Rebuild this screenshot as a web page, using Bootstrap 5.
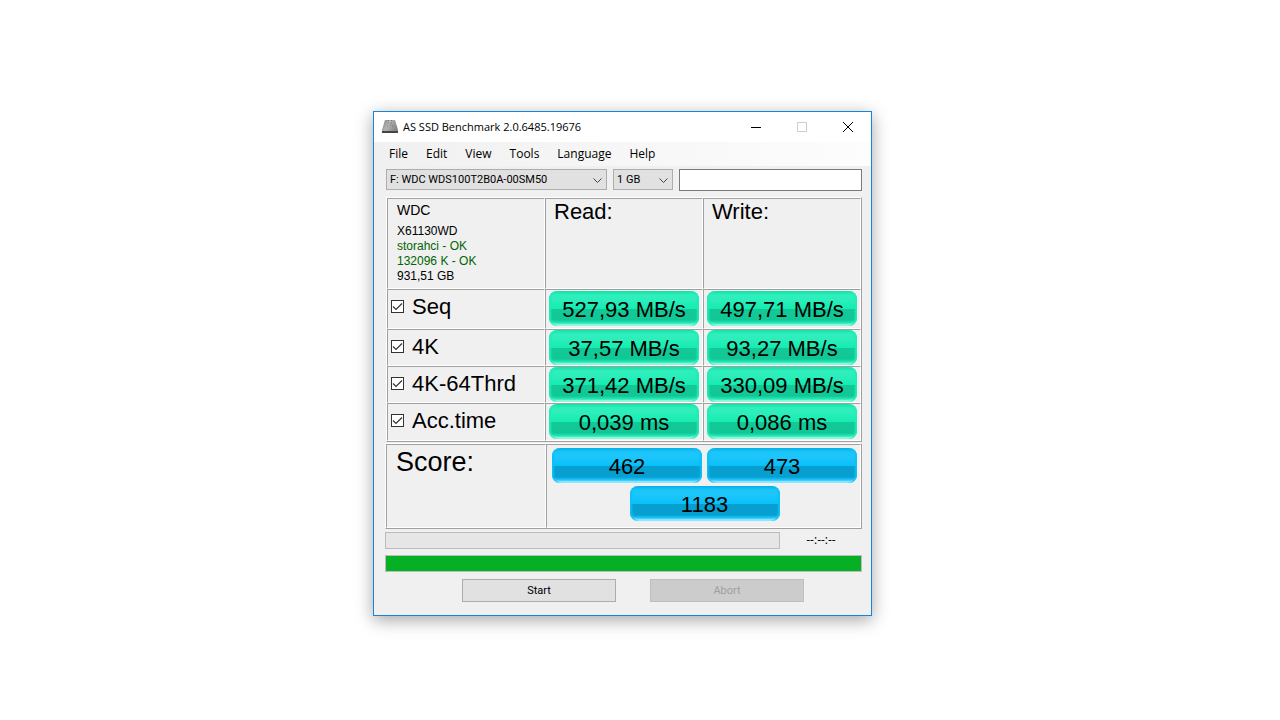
<!DOCTYPE html>
<html lang="en">
<head>
<meta charset="utf-8">
<meta name="viewport" content="width=device-width, initial-scale=1">
<title>AS SSD Benchmark</title>
<link rel="stylesheet" href="https://cdn.jsdelivr.net/npm/bootstrap@5.3.0/dist/css/bootstrap.min.css">
<style>
  body { background: #fff; color: #000; }
  .desktop { padding: 7px 35px 0 0; }
  .app-window {
    max-width: 499px; background: #f0f0f0; border: 1px solid #1883d7;
    box-shadow: 0 4px 16px rgba(0,0,0,.36);
    font: 12px/16px "Open Sans", "Noto Sans", sans-serif;
  }
  .title-bar { height: 30px; background: #fff; padding-left: 8px; }
  .title-bar h1 { font-size: 11px; line-height: 16px; font-weight: 400; padding-left: 5px; }
  .win-btn { width: 46px; height: 30px; padding: 0; border: 0; background: none; display: grid; place-items: center; }
  .menu-bar { height: 24px; padding-left: 15px; background: linear-gradient(90deg, #f0f0f0, #fdfdfd); gap: 18px; }
  .menu-bar a { color: #000; text-decoration: none; }
  .client { padding: 3px 9px 13px 11px; }
  .tool-row { gap: 6px; padding-left: 1px; margin-bottom: 6px; }
  .combo {
    appearance: none; height: 21px; padding: 0 20px 0 3px; border: 1px solid #adadad; border-radius: 0; color: #000;
    background: #e1e1e1 url("data:image/svg+xml,%3Csvg xmlns='http://www.w3.org/2000/svg' width='9' height='6'%3E%3Cpath d='M.5 .5l4 4 4-4' fill='none' stroke='%23444'/%3E%3C/svg%3E") no-repeat right 4px top 8px;
    font: 11px/16px Roboto, sans-serif;
  }
  .combo-size { width: 60px; }
  .name-box { width: 183px; height: 22px; border: 1px solid #7a7a7a; background: #fff; }
  .results, .score-panel { font-family: "Liberation Sans", Arial, sans-serif; font-size: 22px; line-height: 26px; }
  .panel { border: 1px solid; border-color: #fff #a0a0a0 #a0a0a0 #fff; }
  .results-panel { margin-left: 1px; }
  .results { table-layout: fixed; border-collapse: separate; border-spacing: 0; }
  .inset { border: 1px solid !important; border-color: #a0a0a0 #fff #fff #a0a0a0 !important; }
  .results th { font-weight: 400; }
  .results thead th { height: 91px; padding: 0 8px; vertical-align: top; }
  .results thead .drive { padding: 4px 9px 0; font-size: 12px; line-height: 15px; }
  .drive-name { font-size: 14px; line-height: 15px; margin-bottom: 6px; }
  .ok { color: #006400; }
  .results tbody th, .results tbody td { height: 37px; padding: 0 3px; vertical-align: top; }
  .results tbody tr:first-child > * { height: 40px; }
  .results tbody tr:first-child > td { padding-top: 1px; }
  .results tbody tr:last-child > * { height: 38px; }
  .results tbody label { height: 33px; gap: 8px; }
  .tick {
    appearance: none; width: 13px; height: 13px; margin: 0; border: 1px solid #333; background: #fff;
  }
  .tick:checked { background: #fff url("data:image/svg+xml,%3Csvg xmlns='http://www.w3.org/2000/svg' width='11' height='11'%3E%3Cpath d='M1 5.500l3 3 6-6' fill='none' stroke='%23333' stroke-width='1.200'/%3E%3C/svg%3E") center no-repeat; }
  .gauge {
    height: 35px; border-radius: 8px; padding-top: 6px; text-align: center; white-space: nowrap;
    background: linear-gradient(#14e0a6 0, #30efbd 4px, #2ceebb 9px, #14ecb0 18px, #13c997 18px, #12c796 29px, #20ecb8 32px, #a8f7e2 35px);
    box-shadow: inset 3px 0 2px -1px #1cefb6, inset -3px 0 2px -1px #1cefb6, inset 0 -3px 1px -1px rgba(170,250,226,.6);
  }
  .gauge-blue {
    width: 150px;
    background: linear-gradient(#05aee4 0, #1cc6fb 4px, #1cc6fb 9px, #08c0f8 18px, #069fcf 18px, #069fcf 29px, #20c8ff 32px, #a8eaff 35px);
    box-shadow: inset 3px 0 2px -1px #0cc0f8, inset -3px 0 2px -1px #0cc0f8, inset 0 -3px 1px -1px rgba(170,236,255,.6);
  }
  .score-panel { margin-top: 1px; min-height: 86px; }
  .score-title { width: 160px; padding: 1px 9px; font-size: 27px; line-height: 32px; font-weight: 400; }
  .score-values { padding: 3px 3px 6px 5px; gap: 3px; }
  .meter { height: 17px; border: 1px solid #bcbcbc; border-radius: 0; background: #e6e6e6; }
  .meter .progress-bar { background: #06b025; }
  .status-row { margin: 3px 0 6px; }
  .clock { width: 82px; font-size: 12px; }
  .actions { gap: 34px; margin-top: 7px; padding-left: 19px; }
  .act {
    width: 154px; height: 23px; padding: 0; border: 1px solid #adadad; background: #e1e1e1; color: #000;
    font: 11px/16px Roboto, sans-serif;
  }
  .act:disabled { background: #ccc; border-color: #bfbfbf; color: #a0a0a0; }
</style>
</head>
<body>
<div class="desktop min-vh-100 d-flex align-items-center justify-content-center">
  <main class="app-window w-100">
    <header class="title-bar d-flex align-items-center">
      <svg width="16" height="16" viewBox="0 0 16 16" aria-hidden="true">
        <defs><linearGradient id="disk" x2="1" y2=".4"><stop stop-color="#777"/><stop offset=".45" stop-color="#b4b4b4"/><stop offset="1" stop-color="#888"/></linearGradient></defs>
        <path d="M3 1h10l3 10v2H0v-2z" fill="url(#disk)"/>
        <path d="M0 12h16v2H0z" fill="#444"/>
        <path d="M6 1l1 1M10 1L9 2M6 4h1M9 4h1M5 7h1M8 6h1M10 7h1" fill="none" stroke="#777"/>
      </svg>
      <h1 class="mb-0 me-auto">AS SSD Benchmark 2.0.6485.19676</h1>
      <button class="win-btn" type="button" aria-label="Minimize"><svg width="12" height="10"><path d="M1 5.500h10" stroke="#000"/></svg></button>
      <button class="win-btn" type="button" aria-label="Maximize" disabled><svg width="10" height="10"><path d="M.5 .5h9v9h-9z" fill="none" stroke="#ccc"/></svg></button>
      <button class="win-btn" type="button" aria-label="Close"><svg width="12" height="12"><path d="M1 1l10 10M11 1L1 11" stroke="#000"/></svg></button>
    </header>
    <nav class="menu-bar d-flex align-items-center" aria-label="Main menu">
      <a href="#">File</a><a href="#">Edit</a><a href="#">View</a><a href="#">Tools</a><a href="#">Language</a><a href="#">Help</a>
    </nav>
    <div class="client">
      <div class="tool-row d-flex">
        <select class="combo flex-fill" aria-label="Drive"><option>F: WDC WDS100T2B0A-00SM50</option></select>
        <select class="combo combo-size" aria-label="Test size"><option>1 GB</option></select>
        <input class="name-box" type="text" aria-label="Note">
      </div>
      <div class="panel results-panel">
        <table class="results w-100">
          <thead>
            <tr>
              <th class="inset drive">
                <div class="drive-name">WDC</div>
                <div>X61130WD</div>
                <div class="ok">storahci - OK</div>
                <div class="ok">132096 K - OK</div>
                <div>931,51 GB</div>
              </th>
              <th class="inset" scope="col">Read:</th>
              <th class="inset" scope="col">Write:</th>
            </tr>
          </thead>
          <tbody>
            <tr>
              <th class="inset" scope="row"><label class="d-flex align-items-center"><input class="tick" type="checkbox" checked>Seq</label></th>
              <td class="inset"><div class="gauge">527,93 MB/s</div></td>
              <td class="inset"><div class="gauge">497,71 MB/s</div></td>
            </tr>
            <tr>
              <th class="inset" scope="row"><label class="d-flex align-items-center"><input class="tick" type="checkbox" checked>4K</label></th>
              <td class="inset"><div class="gauge">37,57 MB/s</div></td>
              <td class="inset"><div class="gauge">93,27 MB/s</div></td>
            </tr>
            <tr>
              <th class="inset" scope="row"><label class="d-flex align-items-center"><input class="tick" type="checkbox" checked>4K-64Thrd</label></th>
              <td class="inset"><div class="gauge">371,42 MB/s</div></td>
              <td class="inset"><div class="gauge">330,09 MB/s</div></td>
            </tr>
            <tr>
              <th class="inset" scope="row"><label class="d-flex align-items-center"><input class="tick" type="checkbox" checked>Acc.time</label></th>
              <td class="inset"><div class="gauge">0,039 ms</div></td>
              <td class="inset"><div class="gauge">0,086 ms</div></td>
            </tr>
          </tbody>
        </table>
      </div>
      <section class="panel score-panel d-flex">
        <h2 class="inset score-title mb-0">Score:</h2>
        <div class="inset score-values flex-fill d-flex flex-column align-items-center">
          <div class="w-100 d-flex justify-content-between">
            <div class="gauge gauge-blue">462</div>
            <div class="gauge gauge-blue">473</div>
          </div>
          <div class="gauge gauge-blue">1183</div>
        </div>
      </section>
      <div class="status-row d-flex">
        <div class="progress meter flex-fill" role="progressbar" aria-label="Current test" aria-valuenow="0" aria-valuemin="0" aria-valuemax="100"></div>
        <div class="clock text-center">--:--:--</div>
      </div>
      <div class="progress meter" role="progressbar" aria-label="All tests" aria-valuenow="100" aria-valuemin="0" aria-valuemax="100"><div class="progress-bar w-100"></div></div>
      <div class="actions d-flex justify-content-center">
        <button class="act" type="button">Start</button>
        <button class="act" type="button" disabled>Abort</button>
      </div>
    </div>
  </main>
</div>
<script src="https://cdn.jsdelivr.net/npm/bootstrap@5.3.0/dist/js/bootstrap.bundle.min.js"></script>
</body>
</html>
